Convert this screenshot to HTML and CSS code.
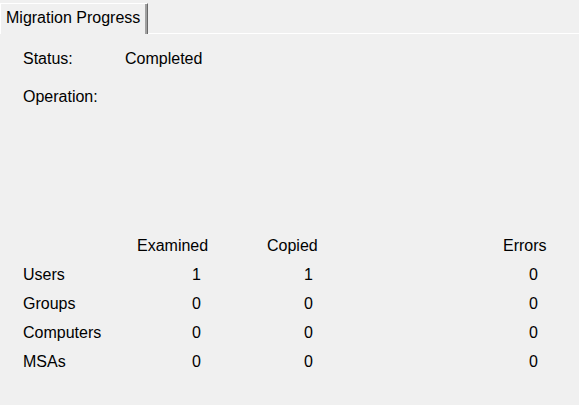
FILE: index.html
```html
<!DOCTYPE html>
<html>
<head>
<meta charset="utf-8">
<link rel="stylesheet" href="styles.css">
</head>
<body>
<div class="tabs">
  <div class="tab">Migration Progress</div>
  <div class="tab-rest"></div>
</div>
<div class="panel">
  <div class="info">
    <div class="info-row"><span class="info-label">Status:</span><span>Completed</span></div>
    <div class="info-row"><span class="info-label">Operation:</span><span></span></div>
  </div>
  <div class="stats">
    <div></div>
    <div class="hdr">Examined</div>
    <div class="hdr">Copied</div>
    <div class="hdr">Errors</div>

    <div>Users</div>
    <div><span class="num n1">1</span></div>
    <div><span class="num n2">1</span></div>
    <div><span class="num n3">0</span></div>

    <div>Groups</div>
    <div><span class="num n1">0</span></div>
    <div><span class="num n2">0</span></div>
    <div><span class="num n3">0</span></div>

    <div>Computers</div>
    <div><span class="num n1">0</span></div>
    <div><span class="num n2">0</span></div>
    <div><span class="num n3">0</span></div>

    <div>MSAs</div>
    <div><span class="num n1">0</span></div>
    <div><span class="num n2">0</span></div>
    <div><span class="num n3">0</span></div>
  </div>
</div>
</body>
</html>
```
FILE: styles.css
```css
html, body {
  margin: 0;
  padding: 0;
  background: #f0f0f0;
}
body {
  width: 579px;
  height: 405px;
  overflow: hidden;
  font-family: "Liberation Sans", Arial, sans-serif;
  font-size: 16px;
  line-height: 18px;
  color: #000;
}
.tabs {
  display: flex;
  height: 34px;
}
.tab {
  box-sizing: border-box;
  width: 148px;
  height: 31px;
  margin-top: 3px;
  padding: 5px 0 0 5px;
  border-top: 1px solid #fff;
  border-left: 1px solid #fff;
  border-right: 1px solid #696969;
  box-shadow: inset -2px 0 0 #a0a0a0;
  white-space: nowrap;
}
.tab-rest {
  flex: 1;
  align-self: flex-end;
  border-bottom: 1px solid #fff;
}
.panel {
  padding: 16px 0 0 23px;
}
.info {
  display: flex;
  flex-direction: column;
  gap: 20px;
}
.info-row {
  display: flex;
}
.info-label {
  width: 102px;
}
.stats {
  margin-top: 131px;
  display: grid;
  grid-template-columns: 114px 130px 236px 1fr;
  grid-auto-rows: 18px;
  row-gap: 11px;
  white-space: nowrap;
}
.stats > div:nth-child(-n+4) {
  margin-bottom: 4px;
}
.num {
  display: inline-block;
  text-align: right;
}
.n1 { width: 64px; }
.n2 { width: 46px; }
.n3 { width: 35px; }
```
